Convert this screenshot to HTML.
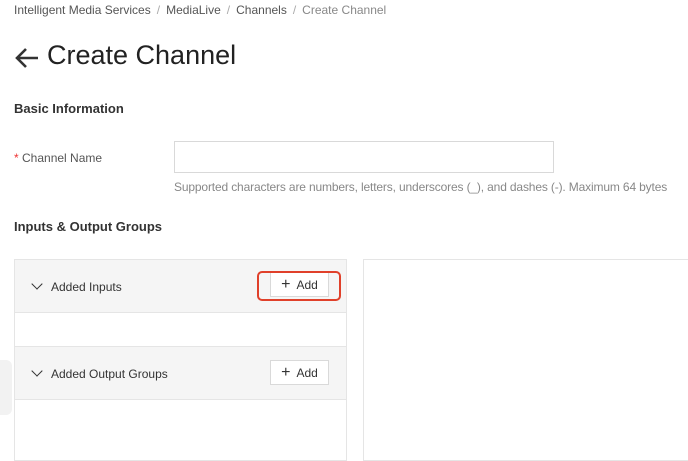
<!DOCTYPE html>
<html><head><style>
body{margin:0;width:688px;height:439px;overflow:hidden;background:#fff;font-family:"Liberation Sans",sans-serif;color:#333;position:relative}
.a{position:absolute;white-space:nowrap}
.bc{top:3px;left:14px;font-size:12px;color:#555}
.bc span{color:#aaa;margin:0 6px}
.panel{border:1px solid #e5e5e5}
.hd{background:#f5f5f5;border-bottom:1px solid #e5e5e5}
.btn{border:1px solid #d9d9d9;background:#fff;font-size:12px;color:#333;width:57px;height:23px;line-height:23px;text-align:center}
.chev{width:7px;height:7px;border-right:1.5px solid #333;border-bottom:1.5px solid #333;transform:rotate(45deg)}
</style></head><body>
<div class="a bc">Intelligent Media Services<span>/</span>MediaLive<span>/</span>Channels<span>/</span><b style="font-weight:normal;color:#888">Create Channel</b></div>
<svg class="a" style="top:47px;left:14px" width="26" height="22" viewBox="0 0 26 22"><path d="M24 11H3M12 2L3 11l9 9" fill="none" stroke="#333" stroke-width="2.6"/></svg>
<div class="a" style="top:40px;left:47px;font-size:27px;color:#222">Create Channel</div>
<div class="a" style="top:101px;left:14px;font-size:13px;font-weight:bold;color:#333">Basic Information</div>
<div class="a" style="top:151px;left:14px;font-size:12px;color:#555"><span style="color:#e33">*</span> Channel Name</div>
<div class="a" style="top:141px;left:174px;width:378px;height:30px;border:1px solid #d9d9d9"></div>
<div class="a" style="top:180px;left:174px;font-size:12px;color:#888;letter-spacing:-0.15px">Supported characters are numbers, letters, underscores (_), and dashes (-). Maximum 64 bytes</div>
<div class="a" style="top:219px;left:14px;font-size:13px;font-weight:bold;color:#333">Inputs &amp; Output Groups</div>
<div class="a" style="top:360px;left:-10px;width:22px;height:55px;background:#f2f2f2;border-radius:6px"></div>
<div class="a panel" style="top:259px;left:14px;width:331px;height:200px">
 <div class="hd" style="height:52px;position:relative">
  <div class="a chev" style="left:18px;top:20px"></div>
  <div class="a" style="left:36px;top:20px;font-size:12px">Added Inputs</div>
  <div class="a btn" style="left:255px;top:12px"><span style="font-size:16px">+</span>&nbsp; Add</div>
 </div>
 <div style="height:33px;border-bottom:1px solid #e5e5e5"></div>
 <div class="hd" style="height:52px;position:relative">
  <div class="a chev" style="left:18px;top:20px"></div>
  <div class="a" style="left:36px;top:20px;font-size:12px">Added Output Groups</div>
  <div class="a btn" style="left:255px;top:13px"><span style="font-size:16px">+</span>&nbsp; Add</div>
 </div>
</div>
<div class="a" style="top:271px;left:257px;width:80px;height:26px;border:2px solid #e0402a;border-radius:5px"></div>
<div class="a panel" style="top:259px;left:363px;width:340px;height:200px"></div>
</body></html>
